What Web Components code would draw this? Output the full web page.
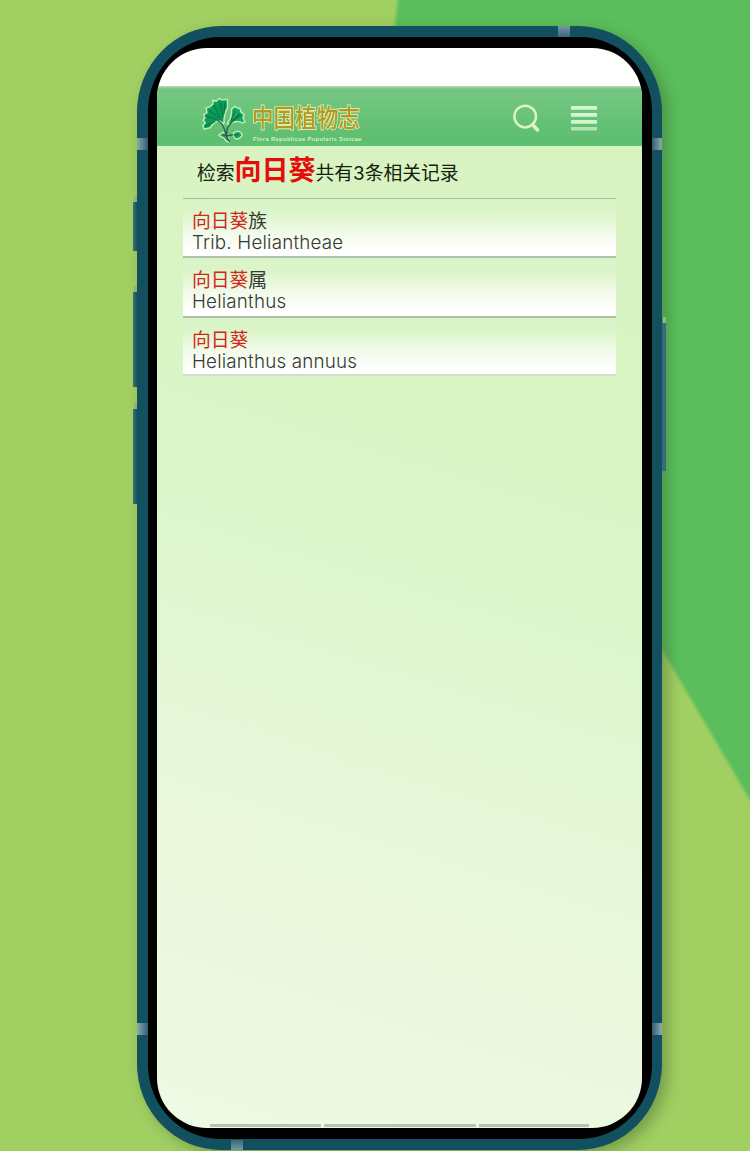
<!DOCTYPE html>
<html lang="zh-CN">
<head>
<meta charset="utf-8">
<title>中国植物志</title>
<style>
html,body{margin:0;width:750px;height:1151px;overflow:hidden}
body{font-family:Inter,"Noto Sans CJK SC",sans-serif}
</style>
</head>
<body>
<flora-stage>
  <phone-frame>
    <flora-header></flora-header>
    <search-results>
      <result-summary term="向日葵" count="3"></result-summary>
      <result-item term="向日葵" rest="族">Trib. Heliantheae</result-item>
      <result-item term="向日葵" rest="属">Helianthus</result-item>
      <result-item term="向日葵" rest="">Helianthus annuus</result-item>
    </search-results>
    <bottom-tabs></bottom-tabs>
  </phone-frame>
</flora-stage>
<script>
const define = (name, render) => customElements.define(name, class extends HTMLElement {
  constructor(){ super(); this.attachShadow({mode:'open'}); }
  connectedCallback(){ this.shadowRoot.innerHTML = render(this); }
});

define('flora-stage', () => `
<style>
:host{display:flex;position:relative;box-sizing:border-box;width:750px;height:1151px;padding:26px 0 0 137px;overflow:hidden;background:#a1cf62}
.bg{position:absolute;inset:0}
</style>
<svg class="bg" width="750" height="1151" viewBox="0 0 750 1151"><defs><filter id="s" x="-5%" y="-5%" width="110%" height="110%"><feGaussianBlur stdDeviation="1.6"/></filter></defs>
<path d="M399-10 395 26 380 180 661 648 770 834V-10z" fill="#5abe5c" filter="url(#s)"/></svg>
<slot></slot>`);

define('phone-frame', () => `
<style>
:host{display:block;position:relative;width:525px;height:1124px}
.body{position:relative;box-sizing:border-box;height:100%;padding:11px 10.5px;background:#12505f;border-radius:84px/86px;box-shadow:6px 5px 14px rgba(60,90,40,.42)}
.bezel{box-sizing:border-box;height:100%;padding:11px 9.5px;background:#000;border-radius:72px/74px}
.screen{display:flex;flex-direction:column;box-sizing:border-box;height:1080px;margin:0 0 0 -.5px;padding-top:38px;border-radius:50px;overflow:hidden;
 background:linear-gradient(#fff 38px,transparent 38px),linear-gradient(197deg,#d9f2c0 0%,#d8f5c3 32%,#ddf6cd 50%,#e9f7dc 72%,#eefae3 100%)}
.band,.key{position:absolute}
.v{width:10.5px;height:12px}
.h{height:10.5px;width:12px;background:linear-gradient(#7797a0,#38697a)}
.key{width:4px;background:linear-gradient(90deg,#41717a,#155263);left:-4px}
.key::before{content:"";position:absolute;left:1px;top:-6px;width:3px;height:6px;background:#91b780}
</style>
<i class="key" style="top:176px;height:49px"></i><i class="key" style="top:266px;height:95px"></i><i class="key" style="top:383px;height:95px"></i>
<div class="body"><div class="bezel"><div class="screen"><slot></slot></div></div></div>
<i class="key" style="left:525px;top:297px;height:148px;background:#376b7b"></i>
<i class="band v" style="left:0;top:112px;background:linear-gradient(90deg,#8fa9ae,#315f70)"></i>
<i class="band v" style="right:0;top:112px;background:linear-gradient(90deg,#315f70,#8fa9ae)"></i>
<i class="band v" style="left:0;top:997px;background:linear-gradient(90deg,#8fa9ae,#315f70)"></i>
<i class="band v" style="right:0;top:997px;background:linear-gradient(90deg,#315f70,#8fa9ae)"></i>
<i class="band h" style="left:421px;top:0"></i>
<i class="band h" style="left:94px;bottom:0;background:linear-gradient(#38697a,#7797a0)"></i>`);

define('flora-header', () => `
<style>
:host{display:flex;box-sizing:border-box;flex:none;height:60px;padding:12px 45px 0 44px;align-items:flex-start;background:linear-gradient(#b5dfb8 0,#74c581 3px,#72c67f 12px,#5dbe70 90%,#60c374)}
.leaf{flex:none;margin-top:-2px}
.name{width:112px;height:46px;margin:2px 0 0 5.5px}
h1{margin:0;height:32px;font:500 25.5px/32px "Noto Sans CJK SC",sans-serif;white-space:nowrap;width:132px;transform:scaleX(.845);transform-origin:0 0;color:#b09b25;-webkit-text-stroke:1.8px #dfebae;paint-order:stroke fill}
p{margin:3px 0 0 1px;font:700 5.8px/8px "Liberation Sans",sans-serif;color:#d5f2bd;white-space:nowrap;letter-spacing:.36px}
.search{margin:5px 0 0 auto}
.menu{margin:8px 0 0 31px}
</style>
<svg class="leaf" width="46" height="48" viewBox="18 18 138 144">
<g stroke="#c0e8b4" stroke-width="4.5" stroke-linejoin="round">
<path d="M86 102Q74 88 62 96Q48 106 46 113L27 118 24 106 31 98 24 90 30 84 26 74 36 68 33 54 44 51 54 42 53 31 64 34 73 25 80 30 97 28 98 52Q86 72 87 100z" fill="#089c58"/>
<path d="M98 98Q112 80 109 58L119 49 128 54 136 56 137 65 148 74 144 83 150 96 142 99Q127 88 98 105z" fill="#0eaa64"/>
<path d="M114 132Q122 120 134 125L142 133Q138 147 122 147Q115 142 114 132z" fill="#14a164"/>
<path d="M71 136 84 127 99 138 104 156 94 154 88 145z" fill="#2f9c6c"/></g>
<g stroke="#08693f" fill="none" stroke-width="2.6"><path d="M78 90 57 45M72 84 42 61M68 90 32 78M60 95 32 108M84 82 76 38M87 72 90 38M108 92 121 60M112 90 139 78M118 136 132 133"/>
<path d="M66 90Q88 100 93 138M135 71Q108 96 97 114L94 140 105 156M94 136 82 134M96 138 115 134" stroke="#2c5b4f" stroke-width="4"/></g></svg>
<div class="name"><h1>中国植物志</h1><p>Flora Republicae Popularis Sinicae</p></div>
<svg class="search" width="28" height="30" viewBox="0 0 28 30" fill="none" stroke="#dcf5b8"><circle cx="13.2" cy="13.6" r="10.8" stroke-width="2.5"/><path d="m20.5 21.5 5 5.5" stroke-width="3.5" stroke-linecap="round"/></svg>
<svg class="menu" width="26" height="26" viewBox="0 0 26 26" fill="#d3f5d1"><path d="M0 0h26v3.7H0zM0 7h26v3.7H0zM0 14h26v3.7H0z"/><path d="M0 21h26v3.5H0z" fill="#b2e3b1"/></svg>`);

define('search-results', () => `
<style>:host{display:block;flex:none;margin-left:26px;width:433px}</style><slot></slot>`);

define('result-summary', el => `
<style>
:host{display:flex;align-items:baseline;box-sizing:border-box;height:53px;padding-left:14.5px;border-bottom:1px solid #a8bd9b;font:18.8px/50px Inter,"Noto Sans CJK SC",sans-serif;color:#15200f;white-space:nowrap}
b{font-size:27px;font-weight:700;color:#e60c0c}
</style>
<span>检索</span><b>${el.getAttribute('term')}</b><span>共有${el.getAttribute('count')}条相关记录</span>`);

define('result-item', el => `
<style>
:host{display:block;box-sizing:border-box;height:59.3px;padding:10px 9.5px 0;border-bottom:2px solid #b1beaa;background:linear-gradient(#d8f4c4 0,#dcf5cb 25%,#f3fbec 62%,#fff 92%);color:#333a32;font:300 18.8px/22px Inter,"Noto Sans CJK SC",sans-serif;letter-spacing:.2px;white-space:nowrap}
:host(:last-of-type){border-bottom-color:#d3dfcb;height:58px}
.cn{font-family:"Noto Sans CJK SC",sans-serif;font-weight:400;font-size:18.8px;letter-spacing:0;margin-bottom:1px}
em{font-style:normal;color:#d3261c}
</style>
<div class="cn"><em>${el.getAttribute('term')}</em>${el.getAttribute('rest')}</div><div><slot></slot></div>`);

define('bottom-tabs', () => `
<style>
:host{display:grid;flex:none;grid-template-columns:111px 152px 110px;column-gap:3px;height:2.5px;margin:auto 0 1.5px 53px}
i{background:#b3c5ac}
</style><i></i><i></i><i></i>`);
</script>
</body>
</html>
